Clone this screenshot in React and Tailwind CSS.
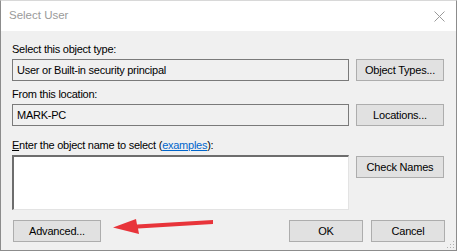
import React from 'react';

const Btn = ({ children, className = '' }) => (
  <button
    className={`h-[22px] bg-[#e1e1e1] border border-[#adadad] text-[11px] tracking-[-0.2px] text-black leading-none ${className}`}
  >
    {children}
  </button>
);

export default function App() {
  return (
    <div
      className="relative w-[457px] h-[251px] flex flex-col bg-[#f0f0f0] border border-[#8c8c8c] border-t-[#d8d8d8]"
      style={{ fontFamily: '"Liberation Sans", Arial, sans-serif' }}
    >
      {/* title bar */}
      <div className="h-[30px] bg-white flex items-center justify-between pl-[8px] pr-[10px]">
        <span className="text-[11.5px] text-[#9a9a9a]">Select User</span>
        <svg width="11" height="11" viewBox="0 0 11 11" className="mr-[1px]">
          <path d="M0.5 0.5L10.5 10.5M10.5 0.5L0.5 10.5" stroke="#9a9a9a" strokeWidth="1" />
        </svg>
      </div>

      <div className="flex-1 px-[11px] text-[11px] tracking-[-0.25px] text-black">
        <div className="mt-[12px] leading-[13px]">Select this object type:</div>
        <div className="mt-[3px] flex items-center">
          <div className="w-[337px] h-[22px] border border-[#7a7a7a] bg-[#f0f0f0] flex items-center pl-[4px]">
            User or Built-in security principal
          </div>
          <Btn className="ml-[7px] w-[88px]">Object Types...</Btn>
        </div>

        <div className="mt-[7px] leading-[13px]">From this location:</div>
        <div className="mt-[3px] flex items-center">
          <div className="w-[337px] h-[22px] border border-[#7a7a7a] bg-[#f0f0f0] flex items-center pl-[4px]">
            MARK-PC
          </div>
          <Btn className="ml-[7px] w-[88px]">Locations...</Btn>
        </div>

        <div className="mt-[13px] leading-[13px]">
          <span className="underline">E</span>nter the object name to select (
          <span className="text-[#0066cc] underline">examples</span>):
        </div>
        <div className="mt-[3px] flex items-start">
          <div className="w-[337px] h-[55px] bg-white border-t-2 border-l-2 border-t-[#6d6d6d] border-l-[#6d6d6d] border-r border-b border-r-[#e3e3e3] border-b-[#e3e3e3]" />
          <Btn className="ml-[7px] w-[88px] mt-[1px]">Check Names</Btn>
        </div>

        <div className="mt-[10px] flex items-center">
          <Btn className="ml-[1px] w-[88px]">Advanced...</Btn>
          <div className="flex-1" />
          <Btn className="w-[74px]">OK</Btn>
          <Btn className="ml-[8px] w-[74px]">Cancel</Btn>
        </div>
      </div>

      {/* red annotation arrow */}
      <svg className="absolute left-[108px] top-[214px]" width="110" height="24" viewBox="0 0 110 24">
        <path d="M104 5 L104 9 L29 13.5 L30 19 L4 12.5 L27 4 L28 9.5 Z" fill="#e8343a" />
      </svg>

      {/* size grip */}
      <svg className="absolute right-[1px] bottom-[1px]" width="10" height="10" viewBox="0 0 10 10">
        <rect x="8" y="2" width="1" height="1" fill="#b0b0b0" />
        <rect x="5" y="5" width="1" height="1" fill="#b0b0b0" />
        <rect x="8" y="5" width="1" height="1" fill="#b0b0b0" />
        <rect x="2" y="8" width="1" height="1" fill="#b0b0b0" />
        <rect x="5" y="8" width="1" height="1" fill="#b0b0b0" />
        <rect x="8" y="8" width="1" height="1" fill="#b0b0b0" />
      </svg>
    </div>
  );
}
